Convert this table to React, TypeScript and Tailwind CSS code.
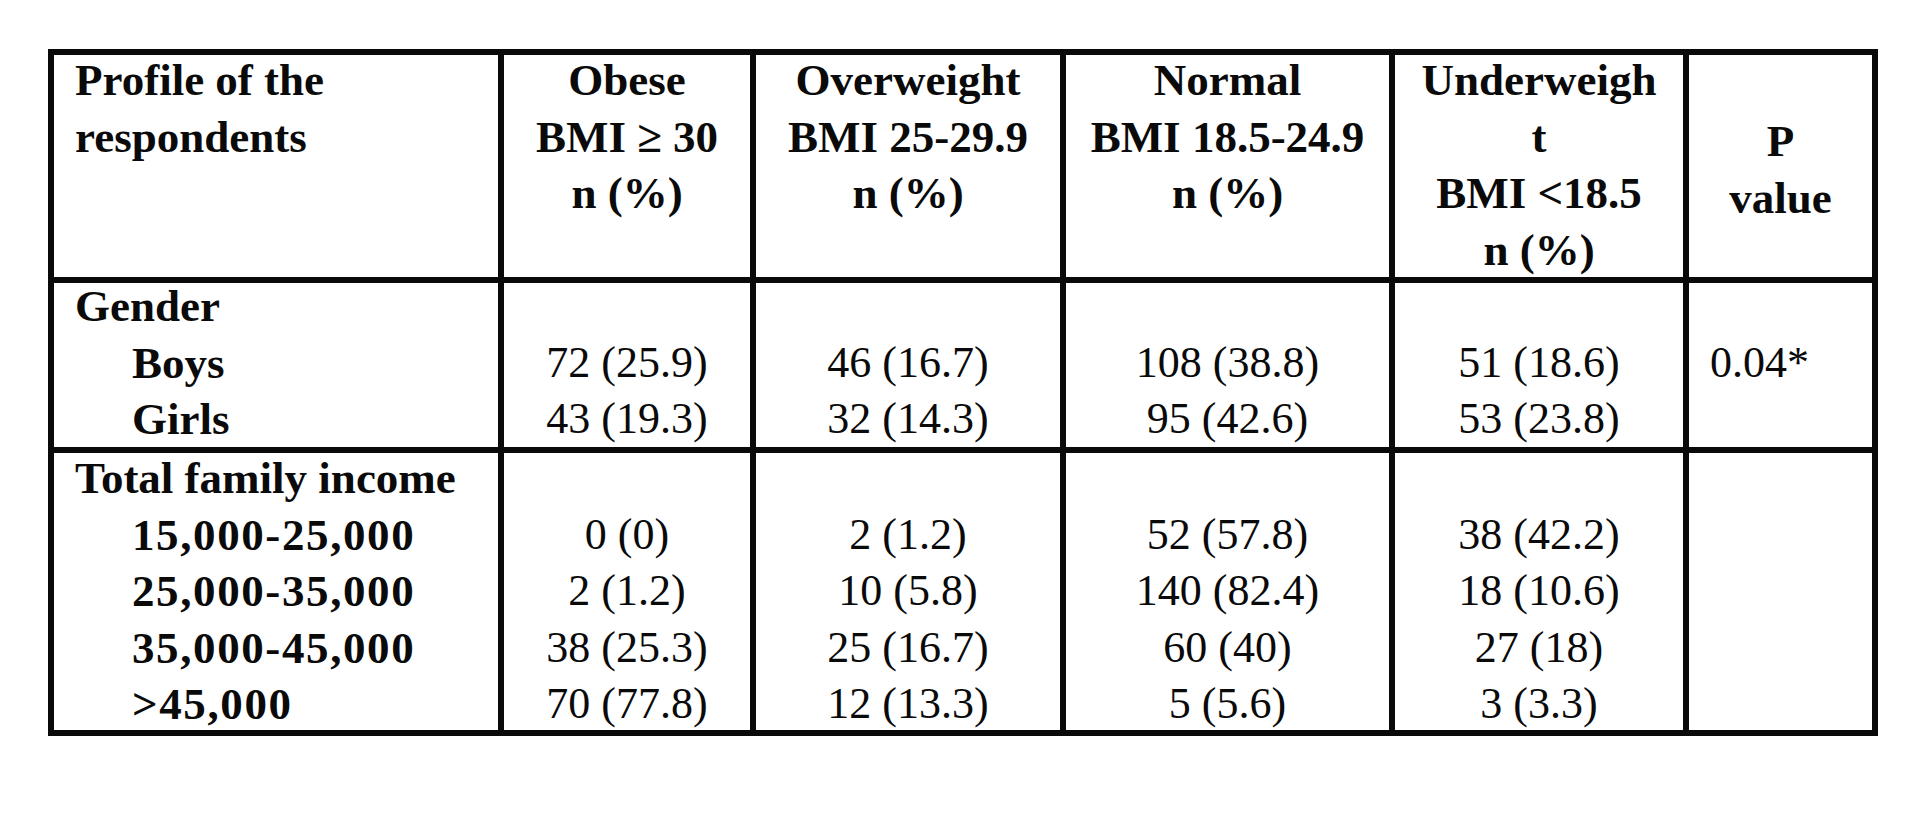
const header = [
  ["Obese", "BMI ≥ 30", "n (%)"],
  ["Overweight", "BMI 25-29.9", "n (%)"],
  ["Normal", "BMI 18.5-24.9", "n (%)"],
  ["Underweigh", "t", "BMI <18.5", "n (%)"],
];

const gender = [
  ["72 (25.9)", "43 (19.3)"],
  ["46 (16.7)", "32 (14.3)"],
  ["108 (38.8)", "95 (42.6)"],
  ["51 (18.6)", "53 (23.8)"],
];

const income = [
  ["0 (0)", "2 (1.2)", "38 (25.3)", "70 (77.8)"],
  ["2 (1.2)", "10 (5.8)", "25 (16.7)", "12 (13.3)"],
  ["52 (57.8)", "140 (82.4)", "60 (40)", "5 (5.6)"],
  ["38 (42.2)", "18 (10.6)", "27 (18)", "3 (3.3)"],
];

const NBSP = "\u00a0";

function Lines({ lines, shift }: { lines: string[]; shift: string }) {
  return (
    <div className={shift}>
      {lines.map((l, i) => (
        <div key={i}>{l || NBSP}</div>
      ))}
    </div>
  );
}

function LabelCell({
  title,
  items,
  wide,
  shift,
}: {
  title: string;
  items: string[];
  wide?: boolean;
  shift: string;
}) {
  return (
    <div className="bg-white pl-[21px] text-[45px] font-bold leading-[56.5px]">
      <div className={shift}>
        <div>{title}</div>
        {items.map((it) => (
          <div key={it} className={`pl-[57px] ${wide ? "tracking-[1.6px]" : ""}`}>
            {it}
          </div>
        ))}
      </div>
    </div>
  );
}

export default function App() {
  return (
    <div className="min-h-screen bg-white pl-[48px] pt-[49px] font-['Liberation_Serif','Times_New_Roman',serif] text-[#0a0a0a]">
      <div className="grid w-fit grid-cols-[444px_246px_304px_323px_288px_183px] grid-rows-[222px_164px_277px] gap-[6px] bg-[#0a0a0a] p-[6px]">
        {/* header row */}
        <div className="bg-white pl-[21px] text-[45px] font-bold leading-[56.5px]">
          <div className="-mt-[3px]">
            <div>Profile of the</div>
            <div>respondents</div>
          </div>
        </div>
        {header.map((col, i) => (
          <div key={i} className="bg-white px-[8px] text-center text-[45px] font-bold leading-[56.5px]">
            <div className="-mt-[3px]">
              {col.map((l, j) => (
                <div key={j}>{l}</div>
              ))}
            </div>
          </div>
        ))}
        <div className="flex items-center justify-center bg-white pt-[7px] text-center text-[45px] font-bold leading-[56.5px]">
          <div>
            <div>P</div>
            <div>value</div>
          </div>
        </div>

        {/* gender row */}
        <LabelCell title="Gender" items={["Boys", "Girls"]} shift="-mt-[5px]" />
        {gender.map((col, i) => (
          <div key={i} className="bg-white text-center text-[44px] leading-[56.5px]">
            <Lines lines={["", ...col]} shift="-mt-[5px]" />
          </div>
        ))}
        <div className="bg-white pl-[21px] text-[44px] leading-[56.5px]">
          <Lines lines={["", "0.04*"]} shift="-mt-[5px]" />
        </div>

        {/* income row */}
        <LabelCell
          title="Total family income"
          items={["15,000-25,000", "25,000-35,000", "35,000-45,000", ">45,000"]}
          wide
          shift="-mt-[3px]"
        />
        {income.map((col, i) => (
          <div key={i} className="bg-white text-center text-[44px] leading-[56.5px]">
            <Lines lines={["", ...col]} shift="-mt-[3px]" />
          </div>
        ))}
        <div className="bg-white" />
      </div>
    </div>
  );
}
